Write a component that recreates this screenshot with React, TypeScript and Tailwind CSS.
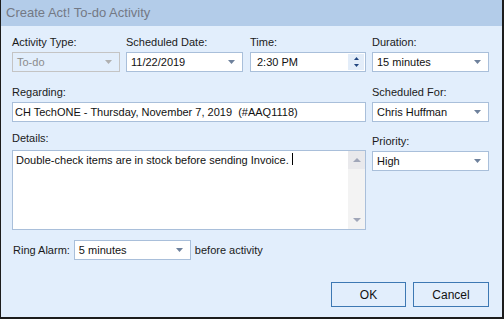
import React from "react";

const font = { fontFamily: '"Liberation Sans", Arial, sans-serif' };

function Arrow({ disabled = false }: { disabled?: boolean }) {
  return (
    <svg width="7" height="4" viewBox="0 0 7 4" className="shrink-0">
      <path d="M0 0 H7 L3.5 4 Z" fill={disabled ? "#b0b0b0" : "#6e819c"} />
    </svg>
  );
}

function Combo({ value, width, disabled = false }: { value: string; width: string; disabled?: boolean }) {
  return (
    <div
      className={`${width} h-[20px] flex items-center justify-between pl-[4px] pr-[7px] border text-[11px] ${
        disabled ? "border-[#c4c4c4] bg-[#e2eefc] text-[#8c8c8c]" : "border-[#a9bfda] bg-white text-[#111]"
      }`}
    >
      <span>{value}</span>
      <Arrow disabled={disabled} />
    </div>
  );
}

function Label({ children, className = "" }: { children: React.ReactNode; className?: string }) {
  return <div className={`text-[11px] leading-[13px] text-[#1a1a1a] ${className}`}>{children}</div>;
}

export default function App() {
  return (
    <div style={font} className="w-[504px] h-[319px] flex flex-col border-l border-r-2 border-b-2 border-[#1c1c1c] bg-[#e2eefc] overflow-hidden">
      {/* title bar */}
      <div className="h-[26px] shrink-0 bg-[#b3cce9] flex items-center pl-[5px] text-[13px] text-[#737985]">
        Create Act! To-do Activity
      </div>

      <div className="flex-1 pl-[11px] pr-[13px] flex flex-col">
        {/* row 1 */}
        <div className="flex mt-[10px]">
          <div className="w-[108px]">
            <Label>Activity Type:</Label>
            <div className="mt-[3px]"><Combo value="To-do" width="w-[108px]" disabled /></div>
          </div>
          <div className="w-[117px] ml-[6px]">
            <Label>Scheduled Date:</Label>
            <div className="mt-[3px]"><Combo value="11/22/2019" width="w-[117px]" /></div>
          </div>
          <div className="w-[116px] ml-[7px]">
            <Label>Time:</Label>
            <div className="mt-[3px] h-[20px] flex border border-[#a9bfda] bg-white text-[11px] text-[#111]">
              <span className="flex-1 pl-[6px] flex items-center">2:30 PM</span>
              <div className="w-[16px] my-[1px] mr-[1px] bg-[#e3edf9] flex flex-col items-center justify-center gap-[4px]">
                <svg width="5" height="3" viewBox="0 0 5 3"><path d="M0 3 H5 L2.5 0 Z" fill="#21457f" /></svg>
                <svg width="5" height="3" viewBox="0 0 5 3"><path d="M0 0 H5 L2.5 3 Z" fill="#21457f" /></svg>
              </div>
            </div>
          </div>
          <div className="w-[117px] ml-[6px]">
            <Label>Duration:</Label>
            <div className="mt-[3px]"><Combo value="15 minutes" width="w-[117px]" /></div>
          </div>
        </div>

        {/* row 2 */}
        <div className="flex mt-[14px]">
          <div className="w-[354px]">
            <Label>Regarding:</Label>
            <div className="mt-[3px] h-[20px] flex items-center pl-[2px] border border-[#a9bfda] bg-white text-[11px] text-[#111] whitespace-pre">
              CH TechONE - Thursday, November 7, 2019  (#AAQ1118)
            </div>
          </div>
          <div className="w-[117px] ml-[6px]">
            <Label>Scheduled For:</Label>
            <div className="mt-[3px]"><Combo value="Chris Huffman" width="w-[117px]" /></div>
          </div>
        </div>

        {/* row 3 */}
        <div className="flex">
          <div className="w-[354px] mt-[10px]">
            <Label>Details:</Label>
            <div className="mt-[5px] h-[80px] flex border border-[#a9bfda] bg-white">
              <div className="flex-1 pl-[3px] pt-[1px] text-[11px] text-[#111] flex items-start">
                <span>Double-check items are in stock before sending Invoice.</span>
                <span className="ml-[3px] mt-[1px] w-px h-[12px] bg-black" />
              </div>
              <div className="w-[17px] bg-[#f3f3f3] flex flex-col justify-between">
                <div className="h-[18px] bg-[#e9e9ec] flex items-center justify-center">
                  <svg width="8" height="4" viewBox="0 0 8 4"><path d="M0 4 H8 L4 0 Z" fill="#a0a6b8" /></svg>
                </div>
                <div className="h-[18px] flex items-center justify-center">
                  <svg width="8" height="4" viewBox="0 0 8 4"><path d="M0 0 H8 L4 4 Z" fill="#a0a6b8" /></svg>
                </div>
              </div>
            </div>
          </div>
          <div className="w-[117px] ml-[6px] mt-[13px]">
            <Label>Priority:</Label>
            <div className="mt-[3px]"><Combo value="High" width="w-[117px]" /></div>
          </div>
        </div>

        {/* ring alarm */}
        <div className="flex items-center mt-[10px] text-[11px] text-[#1a1a1a]">
          <span className="ml-[1px]">Ring Alarm:</span>
          <div className="ml-[4px]"><Combo value="5 minutes" width="w-[117px]" /></div>
          <span className="ml-[4px]">before activity</span>
        </div>

        {/* buttons */}
        <div className="flex justify-end gap-[7px] mt-[22px]">
          <button className="w-[75px] h-[25px] border border-[#3d78b3] bg-[#e2eefc] text-[12px] text-[#111]">OK</button>
          <button className="w-[76px] h-[25px] border border-[#3d78b3] bg-[#e2eefc] text-[12px] text-[#111]">Cancel</button>
        </div>
      </div>
    </div>
  );
}
